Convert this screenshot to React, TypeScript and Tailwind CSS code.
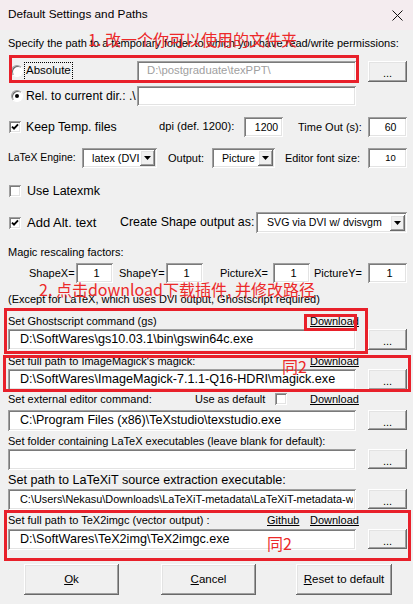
import React from "react";

const SUNKEN =
  "shadow-[inset_1px_1px_0_#a0a0a0,inset_-1px_-1px_0_#ffffff,inset_2px_2px_0_#7a7a7a,inset_-2px_-2px_0_#e3e3e3]";
const RAISED =
  "shadow-[inset_-1px_-1px_0_#696969,inset_1px_1px_0_#ffffff,inset_-2px_-2px_0_#a0a0a0,inset_2px_2px_0_#e3e3e3]";

function TextBox({ className = "", children }: { className?: string; children?: React.ReactNode }) {
  return (
    <div className={`bg-white flex items-center overflow-hidden whitespace-nowrap shrink-0 ${SUNKEN} ${className}`}>
      {children}
    </div>
  );
}

function DotsBtn({ className = "" }: { className?: string }) {
  return (
    <div className={`bg-[#f0f0f0] flex items-center justify-center shrink-0 text-[11px] pt-[4px] ${RAISED} ${className}`}>
      ...
    </div>
  );
}

function Check({ checked = false, className = "" }: { checked?: boolean; className?: string }) {
  return (
    <span className={`w-[12px] h-[12px] bg-white shrink-0 flex items-center justify-center ${SUNKEN} ${className}`}>
      {checked && (
        <svg width="8" height="8" viewBox="0 0 8 8">
          <path d="M1 3.6L3 5.6L7 1.4" stroke="#000" strokeWidth="1.9" fill="none" />
        </svg>
      )}
    </span>
  );
}

function Radio({ checked = false, className = "" }: { checked?: boolean; className?: string }) {
  return (
    <span
      className={`relative w-[12px] h-[12px] rounded-full bg-white shrink-0 border border-t-[#a0a0a0] border-l-[#a0a0a0] border-r-[#ffffff] border-b-[#ffffff] shadow-[inset_1px_1px_0_#696969] flex items-center justify-center ${className}`}
    >
      {checked && <span className="w-[4px] h-[4px] rounded-full bg-black" />}
    </span>
  );
}

function Combo({ className = "", text, textCls = "" }: { className?: string; text: string; textCls?: string }) {
  return (
    <div className={`bg-white flex items-center shrink-0 ${SUNKEN} ${className}`}>
      <span className={`flex-1 whitespace-nowrap ${textCls}`}>{text}</span>
      <div className={`w-[15px] h-[16px] mr-[2px] bg-[#f0f0f0] flex items-center justify-center ${RAISED}`}>
        <svg width="7" height="4" viewBox="0 0 7 4">
          <path d="M0 0H7L3.5 4Z" fill="#000" />
        </svg>
      </div>
    </div>
  );
}

function Link({ children, className = "" }: { children: React.ReactNode; className?: string }) {
  return <span className={`underline underline-offset-[1px] text-[11px] ${className}`}>{children}</span>;
}

function BigBtn({ className = "", children }: { className?: string; children: React.ReactNode }) {
  return (
    <div className={`h-[31px] bg-[#f0f0f0] flex items-center justify-center text-[11.5px] shrink-0 ${RAISED} ${className}`}>
      {children}
    </div>
  );
}

export default function App() {
  return (
    <div className="w-[413px] h-[604px] relative overflow-hidden bg-[#f0f0f0] text-black font-['Liberation_Sans',Arial,sans-serif] text-[11px] leading-none">
      {/* Title bar */}
      <div className="h-[30px] bg-[#f4ecef] flex items-center justify-between pl-[8px] pr-[10px]">
        <span className="text-[11.8px]">Default Settings and Paths</span>
        <svg width="11" height="11" viewBox="0 0 11 11">
          <path d="M0.5 0.5L10.5 10.5M10.5 0.5L0.5 10.5" stroke="#111" strokeWidth="1" />
        </svg>
      </div>

      {/* Body */}
      <div className="pl-[8px] pr-[6px] flex flex-col">
        <div className="mt-[6px] h-[14px] flex items-center whitespace-nowrap">
          Specify the path to a temporary folder to which you have read/write permissions:
        </div>

        {/* Absolute */}
        <div className="mt-[10px] h-[22px] flex items-center">
          <Radio className="ml-[3px]" />
          <span className="ml-[1px] h-[19px] px-[1px] border border-dotted border-black flex items-center text-[11.5px]">
            Absolute
          </span>
          <TextBox className="ml-auto w-[219px] h-[21px] pl-[10px] text-[11.3px] text-[#a0a0a0]">
            D:\postgraduate\texPPT\
          </TextBox>
          <DotsBtn className="ml-[12px] w-[39px] h-[21px]" />
        </div>

        {/* Rel */}
        <div className="mt-[4px] h-[20px] flex items-center">
          <Radio checked className="ml-[3px]" />
          <span className="ml-[3px] text-[12.2px] whitespace-nowrap">Rel. to current dir.: .\</span>
          <TextBox className="ml-auto mr-[51px] w-[219px] h-[20px]" />
        </div>

        {/* Keep temp */}
        <div className="mt-[11px] h-[20px] flex items-center">
          <div className="w-[151px] flex items-center">
            <Check checked className="ml-[1px]" />
            <span className="ml-[5px] text-[12.3px]">Keep Temp. files</span>
          </div>
          <span className="w-[85px] text-[11.2px] whitespace-nowrap">dpi (def. 1200):</span>
          <TextBox className="w-[39px] h-[20px] justify-center pl-[6px] text-[10.5px]">1200</TextBox>
          <span className="ml-[15px] w-[70px] text-[11px] whitespace-nowrap">Time Out (s):</span>
          <TextBox className="w-[39px] h-[20px] justify-center pl-[6px] text-[10.5px]">60</TextBox>
        </div>

        {/* Engine */}
        <div className="mt-[11px] h-[20px] flex items-center">
          <span className="w-[74px] text-[10.4px] whitespace-nowrap">LaTeX Engine:</span>
          <Combo className="w-[75px] h-[20px]" text="latex (DVI" textCls="pl-[10px] text-[10.8px]" />
          <span className="ml-[11px] w-[44px] text-[11px]">Output:</span>
          <Combo className="w-[63px] h-[20px]" text="Picture" textCls="pl-[10px] text-[10.6px]" />
          <span className="ml-[10px] w-[83px] text-[10.9px] whitespace-nowrap">Editor font size:</span>
          <TextBox className="w-[39px] h-[20px] justify-center pl-[6px] text-[9.5px]">10</TextBox>
        </div>

        {/* Latexmk */}
        <div className="mt-[16px] h-[14px] flex items-center">
          <Check className="ml-[1px]" />
          <span className="ml-[6px] text-[12.5px]">Use Latexmk</span>
        </div>

        {/* Add alt */}
        <div className="mt-[14px] h-[21px] flex items-center">
          <div className="w-[112px] flex items-center">
            <Check checked className="ml-[1px]" />
            <span className="ml-[6px] text-[13px] whitespace-nowrap">Add Alt. text</span>
          </div>
          <span className="w-[136px] text-[12.4px] whitespace-nowrap">Create Shape output as:</span>
          <Combo className="w-[151px] h-[21px]" text="SVG via DVI w/ dvisvgm" textCls="pl-[11px] text-[10.6px]" />
        </div>

        {/* Magic */}
        <div className="mt-[12px] h-[14px] flex items-center">Magic rescaling factors:</div>

        <div className="mt-[4px] h-[20px] flex items-center">
          <span className="ml-[21px] w-[47px]">ShapeX=</span>
          <TextBox className="w-[37px] h-[20px] justify-center pl-[4px] text-[11px]">1</TextBox>
          <span className="ml-[6px] w-[47px]">ShapeY=</span>
          <TextBox className="w-[37px] h-[20px] justify-center pl-[4px] text-[11px]">1</TextBox>
          <span className="ml-[17px] w-[53px]">PictureX=</span>
          <TextBox className="w-[37px] h-[20px] justify-center pl-[4px] text-[11px]">1</TextBox>
          <span className="ml-[4px] w-[54px]">PictureY=</span>
          <TextBox className="w-[39px] h-[20px] justify-center pl-[4px] text-[11px]">1</TextBox>
        </div>

        <div className="mt-[9px] h-[14px] flex items-center whitespace-nowrap">
          (Except for LaTeX, which uses DVI output, Ghostscript required)
        </div>

        {/* Ghostscript */}
        <div className="mt-[7px] h-[16px] flex items-center">
          <span className="w-[302px]">Set Ghostscript command (gs)</span>
          <Link>Download</Link>
        </div>
        <div className="h-[21px] flex items-center">
          <TextBox className="w-[348px] h-[21px] pl-[12px] text-[12.6px]">D:\SoftWares\gs10.03.1\bin\gswin64c.exe</TextBox>
          <DotsBtn className="ml-[12px] w-[39px] h-[21px]" />
        </div>

        {/* ImageMagick */}
        <div className="mt-[3px] h-[16px] flex items-center">
          <span className="w-[302px]">Set full path to ImageMagick's magick:</span>
          <Link>Download</Link>
        </div>
        <div className="h-[21px] flex items-center">
          <TextBox className="w-[348px] h-[21px] pl-[12px] text-[12.6px]">
            D:\SoftWares\ImageMagick-7.1.1-Q16-HDRI\magick.exe
          </TextBox>
          <DotsBtn className="ml-[12px] w-[39px] h-[21px]" />
        </div>

        {/* External editor */}
        <div className="mt-[1px] h-[16px] flex items-center">
          <span className="w-[187px]">Set external editor command:</span>
          <span className="w-[80px]">Use as default</span>
          <Check />
          <Link className="ml-[23px]">Download</Link>
        </div>
        <div className="mt-[3px] h-[21px] flex items-center">
          <TextBox className="w-[348px] h-[21px] pl-[12px] text-[12.5px]">
            C:\Program Files (x86)\TeXstudio\texstudio.exe
          </TextBox>
          <DotsBtn className="ml-[12px] w-[39px] h-[20px] self-start" />
        </div>

        {/* LaTeX folder */}
        <div className="mt-[2px] h-[16px] flex items-center whitespace-nowrap">
          Set folder containing LaTeX executables (leave blank for default):
        </div>
        <div className="h-[21px] flex items-center">
          <TextBox className="w-[348px] h-[21px]" />
          <DotsBtn className="ml-[12px] w-[39px] h-[20px] self-start" />
        </div>

        {/* LaTeXiT */}
        <div className="mt-[2px] h-[16px] flex items-center whitespace-nowrap text-[12.6px]">
          Set path to LaTeXiT source extraction executable:
        </div>
        <div className="mt-[1px] h-[21px] flex items-center">
          <TextBox className="w-[348px] h-[21px] pl-[12px] text-[10.9px]">
            <span className="block w-[333px] overflow-hidden">
              C:\Users\Nekasu\Downloads\LaTeXiT-metadata\LaTeXiT-metadata-wi
            </span>
          </TextBox>
          <DotsBtn className="ml-[12px] w-[39px] h-[20px] self-start" />
        </div>

        {/* TeX2imgc */}
        <div className="mt-[2px] h-[16px] flex items-center">
          <span className="w-[259px] whitespace-nowrap">Set full path to TeX2imgc (vector output) :</span>
          <Link className="w-[43px]">Github</Link>
          <Link>Download</Link>
        </div>
        <div className="mt-[1px] h-[21px] flex items-center">
          <TextBox className="w-[348px] h-[21px] pl-[12px] text-[12.6px]">D:\SoftWares\TeX2img\TeX2imgc.exe</TextBox>
          <DotsBtn className="ml-[12px] w-[39px] h-[20px] self-start" />
        </div>

        {/* Buttons */}
        <div className="mt-[14px] flex items-center">
          <BigBtn className="ml-[16px] w-[95px]">
            <span className="underline">O</span>k
          </BigBtn>
          <BigBtn className="ml-[42px] w-[95px]">
            <span className="underline">C</span>ancel
          </BigBtn>
          <BigBtn className="ml-[40px] w-[96px]">
            <span className="underline">R</span>eset to default
          </BigBtn>
        </div>
      </div>

      {/* Annotations (overlay) */}
      <div className="absolute left-[88px] top-[29px] text-[16px] leading-[20px] text-[#ec2a2a] whitespace-nowrap font-['Noto_Sans_CJK_SC',sans-serif] pointer-events-none">
        1. 改一个你可以使用的文件夹
      </div>
      <div className="absolute left-[9px] top-[55px] w-[350px] h-[28px] border-[3px] border-[#e8202a] pointer-events-none" />

      <div className="absolute left-[39px] top-[279px] text-[16px] leading-[20px] text-[#ec2a2a] whitespace-nowrap font-['Noto_Sans_CJK_SC',sans-serif] pointer-events-none">
        2. 点击download下载插件, 并修改路径
      </div>

      <div className="absolute left-[4px] top-[308px] w-[364px] h-[46px] border-[3px] border-[#e8202a] pointer-events-none" />
      <div className="absolute left-[304px] top-[314px] w-[53px] h-[17px] border-[3px] border-[#e8202a] pointer-events-none" />

      <div className="absolute left-[3px] top-[355px] w-[408px] h-[37px] border-[3px] border-[#e8202a] pointer-events-none" />
      <div className="absolute left-[282px] top-[356px] text-[16px] leading-[20px] text-[#ec2a2a] whitespace-nowrap font-['Noto_Sans_CJK_SC',sans-serif] pointer-events-none">
        同2
      </div>

      <div className="absolute left-[4px] top-[510px] w-[407px] h-[51px] border-[3px] border-[#e8202a] pointer-events-none" />
      <div className="absolute left-[267px] top-[533px] text-[16px] leading-[20px] text-[#ec2a2a] whitespace-nowrap font-['Noto_Sans_CJK_SC',sans-serif] pointer-events-none">
        同2
      </div>
    </div>
  );
}
